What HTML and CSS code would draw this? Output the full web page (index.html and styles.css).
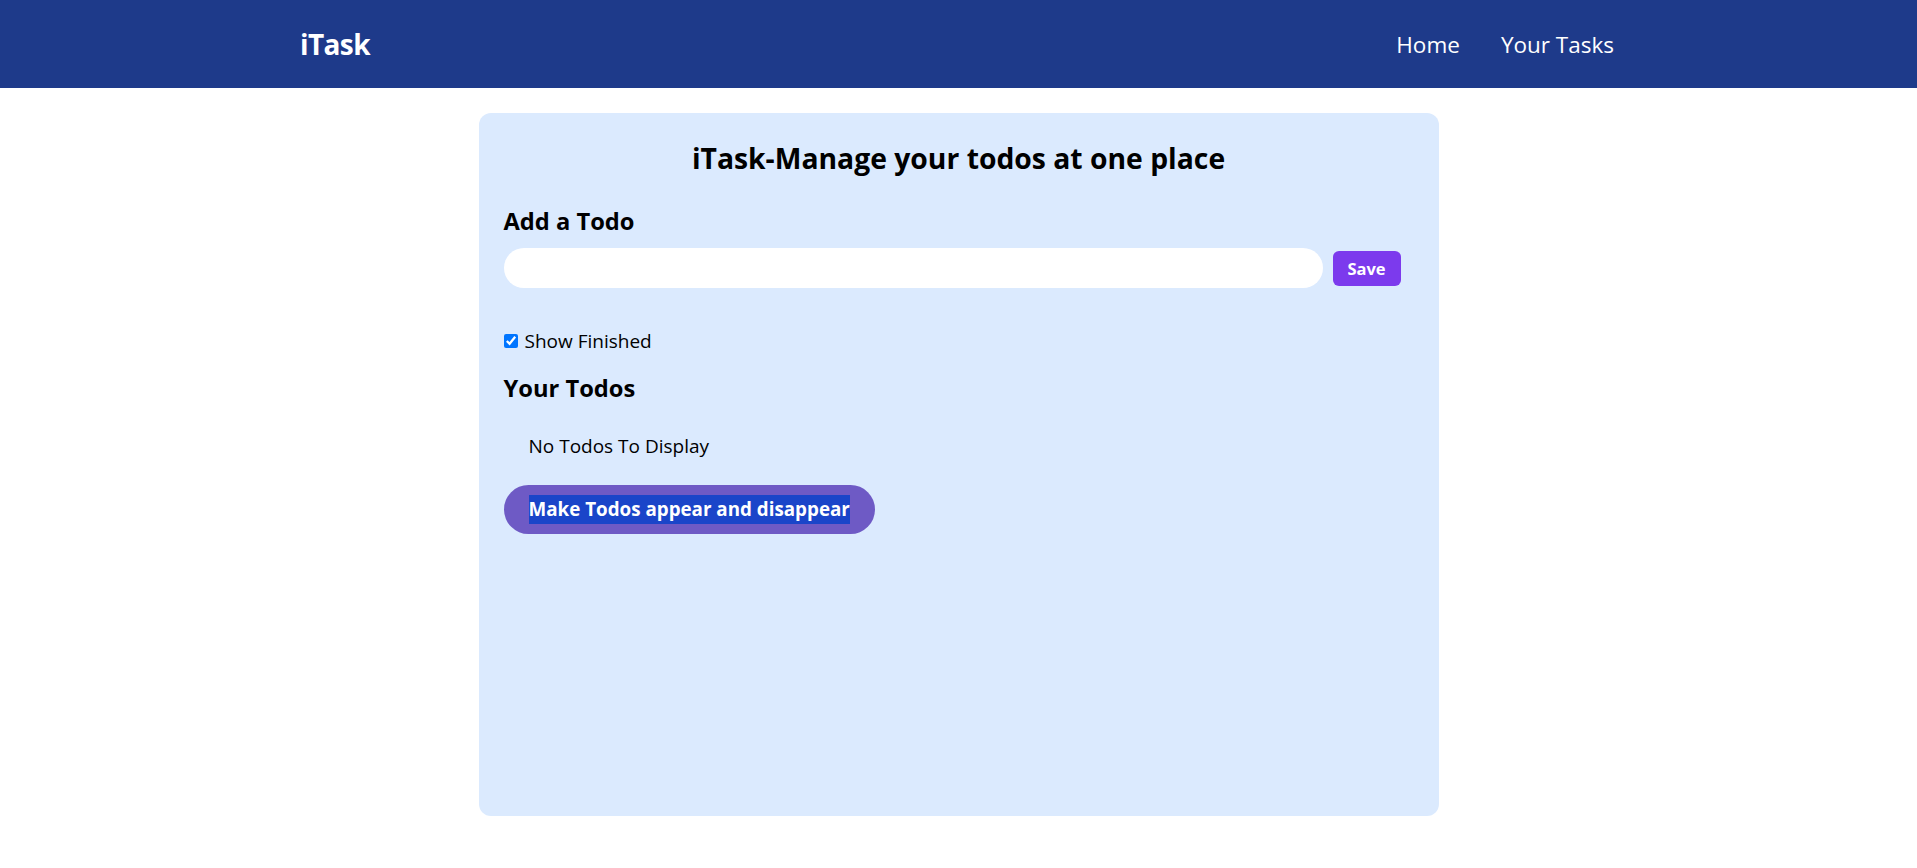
FILE: index.html
```html
<!DOCTYPE html>
<html lang="en">
<head>
<meta charset="utf-8">
<title>iTask</title>
<link rel="stylesheet" href="styles.css">
</head>
<body>
<nav class="navbar">
  <div class="logo">iTask</div>
  <ul class="nav-links">
    <li>Home</li>
    <li>Your Tasks</li>
  </ul>
</nav>
<main class="card">
  <h1 class="title">iTask-Manage your todos at one place</h1>
  <section class="add-todo">
    <h2 class="section-heading add-heading">Add a Todo</h2>
    <div class="input-row">
      <input class="todo-input" type="text">
      <button class="save-btn">Save</button>
    </div>
  </section>
  <label class="show-finished"><input type="checkbox" class="finished-box" checked><span>Show Finished</span></label>
  <h2 class="section-heading todos-heading">Your Todos</h2>
  <div class="todos">
    <div class="empty">No Todos To Display</div>
  </div>
  <button class="toggle-btn"><span class="selected">Make Todos appear and disappear</span></button>
</main>
</body>
</html>
```
FILE: styles.css
```css
* { box-sizing: border-box; }
html, body { margin: 0; padding: 0; }
body {
  font-family: "Open Sans", "Noto Sans", sans-serif;
  background: #ffffff;
  color: #000000;
}
.navbar {
  height: 88px;
  background: #1e3a8a;
  color: #ffffff;
  display: flex;
  justify-content: space-between;
  align-items: center;
  padding: 0 303px 0 300px;
}
.logo {
  font-size: 28px;
  font-weight: 700;
  letter-spacing: -0.6px;
}
.nav-links {
  list-style: none;
  margin: 0;
  padding: 0;
  display: flex;
  gap: 41px;
  font-size: 22.5px;
}
.card {
  width: 960px;
  margin: 25px auto 0;
  min-height: 703px;
  background: #dbeafe;
  border-radius: 12px;
  padding: 25px 38px 25px 25px;
}
.title {
  margin: 0;
  text-align: center;
  font-size: 28.3px;
  line-height: 40px;
  font-weight: 700;
  padding-left: 13px;
}
.section-heading {
  margin: 0;
  font-size: 23.7px;
  line-height: 35px;
  font-weight: 700;
}
.add-heading { margin-top: 26px; }
.input-row {
  display: flex;
  align-items: center;
  gap: 10px;
  margin-top: 9px;
}
.todo-input {
  flex: 1;
  height: 40px;
  border: none;
  border-radius: 9999px;
  background: #ffffff;
  padding: 0 20px;
  outline: none;
}
.save-btn {
  width: 68px;
  height: 35px;
  border: none;
  border-radius: 6px;
  background: #7c3aed;
  color: #ffffff;
  font-family: inherit;
  font-size: 16.5px;
  font-weight: 700;
  padding: 0;
}
.show-finished {
  display: flex;
  align-items: center;
  gap: 7px;
  margin-top: 38px;
  height: 30px;
  font-size: 19px;
}
.finished-box {
  margin: 0;
  width: 14px;
  height: 14px;
  accent-color: #0075ff;
}
.todos-heading { margin-top: 15px; }
.todos { margin-top: 25px; }
.empty {
  margin-left: 25px;
  font-size: 19px;
  line-height: 30px;
}
.toggle-btn {
  margin-top: 24px;
  height: 49px;
  border: none;
  border-radius: 9999px;
  background: #6e5ac5;
  color: #ffffff;
  font-family: inherit;
  font-size: 18.8px;
  font-weight: 700;
  padding: 0 25px;
  display: flex;
  align-items: center;
}
.selected {
  background: #1a45c9;
  line-height: 29px;
  display: inline-block;
}
```
